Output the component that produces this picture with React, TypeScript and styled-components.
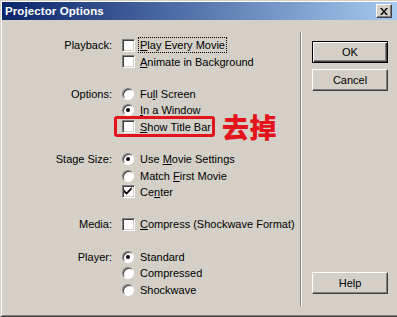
import React from 'react';
import styled, { createGlobalStyle } from 'styled-components';

const GlobalStyle = createGlobalStyle`
    html, body {
        margin: 0;
        padding: 0;
        overflow: hidden;
        background: #d4d0c8;
    }
    body {
        font-family: "Liberation Sans", Arial, sans-serif;
        font-size: 11px;
        color: #000;
    }
`;

// Window chrome
const Window = styled.div`
    width: 399px;
    height: 317px;
    box-sizing: border-box;
    background: #d4d0c8;
    border: 1px solid;
    border-color: #d4d0c8 #404040 #404040 #d4d0c8;
    box-shadow: inset 1px 1px #fff, inset -1px -1px #808080;
    padding: 1px;
    display: flex;
    flex-direction: column;
`;
const TitleBar = styled.div`
    height: 18px;
    flex: none;
    display: flex;
    align-items: center;
    justify-content: space-between;
    padding: 0 5px 0 3px;
    background: linear-gradient(to right, #0a246a, #a6caf0);
`;
const TitleText = styled.span`
    color: #fff;
    font-weight: bold;
    font-size: 11.5px;
    letter-spacing: 0.1px;
`;
const CloseButton = styled.div`
    width: 16px;
    height: 14px;
    box-sizing: border-box;
    background: #d4d0c8;
    border: 1px solid;
    border-color: #fff #404040 #404040 #fff;
    box-shadow: inset -1px -1px #808080;
    display: flex;
    align-items: center;
    justify-content: center;
`;

const Body = styled.div`
    flex: 1;
    display: flex;
`;

// Left: option groups
const Form = styled.div`
    width: 298px;
    padding-top: 17px;
    display: flex;
    flex-direction: column;
    gap: 16px;
`;
const Group = styled.div`
    display: grid;
    grid-template-columns: 110px 1fr;
    column-gap: 10px;
`;
const GroupLabel = styled.div`
    text-align: right;
    height: 16.5px;
    line-height: 16.5px;
`;
const Options = styled.div`
    display: flex;
    flex-direction: column;
`;
const Row = styled.div`
    height: 16.4px;
    display: flex;
    align-items: center;
    white-space: nowrap;
`;
const ControlSlot = styled.span`
    width: 18px;
    flex: none;
    display: flex;
    align-items: center;
`;
const CheckBox = styled.span`
    width: 13px;
    height: 13px;
    box-sizing: border-box;
    background: #fff;
    border: 1px solid;
    border-color: #808080 #fff #fff #808080;
    box-shadow: inset 1px 1px #404040, inset -1px -1px #d4d0c8;
    display: flex;
    align-items: center;
    justify-content: center;
`;
const Radio = styled.span<{ $on?: boolean }>`
    width: 12px;
    height: 12px;
    box-sizing: border-box;
    border-radius: 50%;
    background: #fff;
    border: 1px solid;
    border-color: #808080 #fff #fff #808080;
    box-shadow: inset 1px 1px #404040;
    display: flex;
    align-items: center;
    justify-content: center;

    &::after {
        content: '';
        width: 4px;
        height: 4px;
        border-radius: 50%;
        background: ${p => (p.$on ? '#000' : 'transparent')};
    }
`;
const Focus = styled.span`
    outline: 1px dotted #000;
    outline-offset: 0;
    padding: 0 1px;
    margin-left: -1px;
    line-height: 14px;
`;
const Key = styled.span`
    text-decoration: underline;
    text-underline-offset: 1px;
`;

// red annotation around "Show Title Bar"
const Annotated = styled.span`
    display: flex;
    align-items: center;
    margin-left: -8px;
    padding: 0 1px 0 5px;
    height: 21px;
    box-sizing: border-box;
    border: 3px solid #e3141c;
    border-radius: 3px;
`;
const Note = styled.span`
    margin-left: 7px;
    color: #e3141c;
    font-family: "Noto Sans CJK SC", sans-serif;
    font-weight: 900;
    font-size: 27px;
    line-height: 1;
    letter-spacing: 0.5px;
`;

const Separator = styled.div`
    width: 0;
    margin: 12px 0 9px 0;
    border-left: 1px solid #808080;
    border-right: 1px solid #fff;
`;

// Right: buttons
const Buttons = styled.div`
    margin-left: 10px;
    padding: 21px 0 21px 0;
    width: 76px;
    display: flex;
    flex-direction: column;
    gap: 6px;
`;
const Button = styled.div<{ $default?: boolean; $bottom?: boolean }>`
    height: 22px;
    box-sizing: border-box;
    display: flex;
    align-items: center;
    justify-content: center;
    background: #d4d0c8;
    margin-top: ${p => (p.$bottom ? 'auto' : '0')};
    border: 1px solid;
    border-color: ${p => (p.$default ? '#000' : '#fff #404040 #404040 #fff')};
    box-shadow: ${p =>
        p.$default
            ? 'inset 1px 1px #fff, inset -1px -1px #404040, inset -2px -2px #808080'
            : 'inset -1px -1px #808080'};
`;

const Check = () => (
    <svg width="9" height="9" viewBox="0 0 7 7">
        <path d="M0 2 L2 4 L6 0 L6 2 L2 6 L0 4 Z" fill="#000" />
    </svg>
);

type Opt = { kind: 'check' | 'radio'; on?: boolean; label: React.ReactNode };

const Control: React.FC<{ opt: Opt }> = ({ opt }) => (
    <ControlSlot>
        {opt.kind === 'check'
            ? <CheckBox>{opt.on && <Check />}</CheckBox>
            : <Radio $on={opt.on} />}
    </ControlSlot>
);

const OptionGroup: React.FC<{ label: string; opts: Opt[] }> = ({ label, opts }) => (
    <Group>
        <GroupLabel>{label}</GroupLabel>
        <Options>
            {opts.map((o, i) => (
                <Row key={i}>
                    <Control opt={o} />
                    {o.label}
                </Row>
            ))}
        </Options>
    </Group>
);

export default function App() {
    return <>
        <GlobalStyle />
        <Window>
            <TitleBar>
                <TitleText>Projector Options</TitleText>
                <CloseButton>
                    <svg width="8" height="7" viewBox="0 0 8 7">
                        <path d="M0 0 L2 0 L4 2.5 L6 0 L8 0 L5 3.5 L8 7 L6 7 L4 4.5 L2 7 L0 7 L3 3.5 Z" fill="#000" />
                    </svg>
                </CloseButton>
            </TitleBar>
            <Body>
                <Form>
                    <OptionGroup label="Playback:" opts={[
                        { kind: 'check', label: <Focus><Key>P</Key>lay Every Movie</Focus> },
                        { kind: 'check', label: <span><Key>A</Key>nimate in Background</span> },
                    ]} />
                    <Group>
                        <GroupLabel>Options:</GroupLabel>
                        <Options>
                            <Row><Control opt={{ kind: 'radio', label: '' }} />Fu<Key>l</Key>l Screen</Row>
                            <Row><Control opt={{ kind: 'radio', on: true, label: '' }} /><Key>I</Key>n a Window</Row>
                            <Row>
                                <Annotated>
                                    <Control opt={{ kind: 'check', label: '' }} />
                                    <span><Key>S</Key>how Title Bar</span>
                                </Annotated>
                                <Note>去掉</Note>
                            </Row>
                        </Options>
                    </Group>
                    <OptionGroup label="Stage Size:" opts={[
                        { kind: 'radio', on: true, label: <span>Use <Key>M</Key>ovie Settings</span> },
                        { kind: 'radio', label: <span>Match <Key>F</Key>irst Movie</span> },
                        { kind: 'check', on: true, label: <span>Ce<Key>n</Key>ter</span> },
                    ]} />
                    <OptionGroup label="Media:" opts={[
                        { kind: 'check', label: <span><Key>C</Key>ompress (Shockwave Format)</span> },
                    ]} />
                    <OptionGroup label="Player:" opts={[
                        { kind: 'radio', on: true, label: 'Standard' },
                        { kind: 'radio', label: 'Compressed' },
                        { kind: 'radio', label: 'Shockwave' },
                    ]} />
                </Form>
                <Separator />
                <Buttons>
                    <Button $default>OK</Button>
                    <Button>Cancel</Button>
                    <Button $bottom>Help</Button>
                </Buttons>
            </Body>
        </Window>
    </>;
}
